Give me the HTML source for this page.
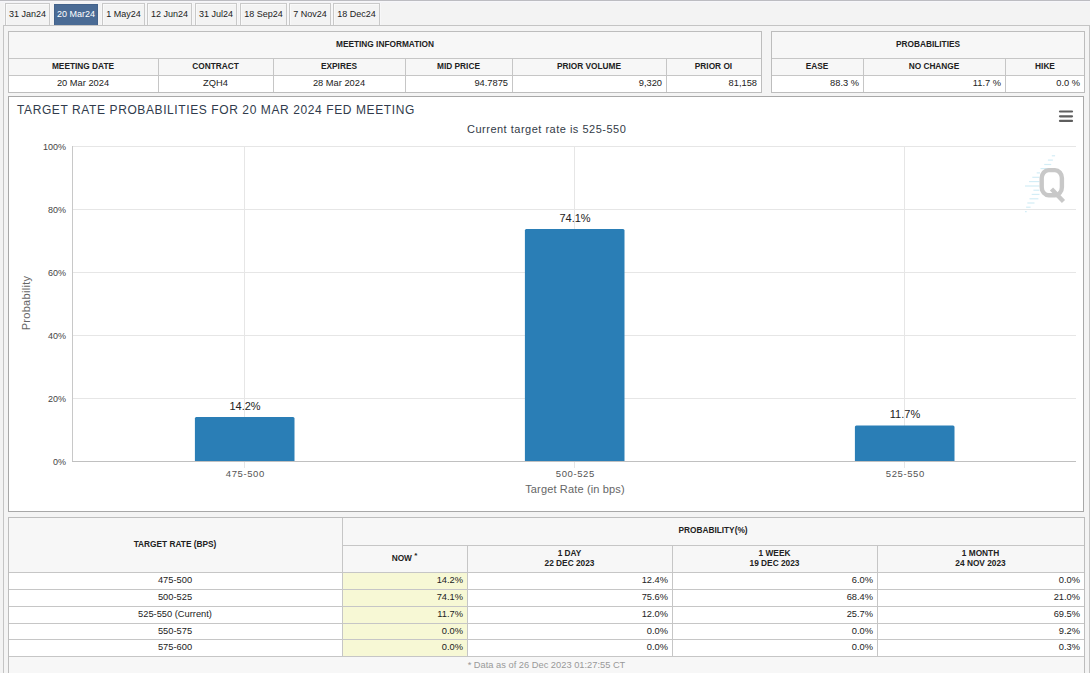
<!DOCTYPE html>
<html><head><meta charset="utf-8">
<style>
*{box-sizing:border-box;margin:0;padding:0}
html,body{width:1090px;height:673px;overflow:hidden}
body{background:#f3f3f3;position:relative;font-family:"Liberation Sans",sans-serif;color:#222}
.a{position:absolute}
.topline{left:0;top:0;width:1090px;height:1px;background:#bcbcc1;box-shadow:0 1px 0 #f6f6f9,0 2px 0 #f3f3f6}
.tab{position:absolute;top:3px;height:22px;border:1px solid #c9c9c9;border-bottom:none;background:#f3f3f3;font-size:9px;color:#222;text-align:center;line-height:21px;white-space:nowrap;box-shadow:inset 1px 1px 0 #f9f9f9,-1px 0 0 #f7f7f8,1px 0 0 #f7f7f8}
.tab.sel{top:4px;height:21px;line-height:19px;background:#4a6b95;border:1px solid #43628b;border-bottom:none;color:#fff;box-shadow:none}
.outer{left:3px;top:25px;width:1087px;height:660px;border:1px solid #c4c4c4;background:#f4f4f4}
.box{position:absolute;border:1px solid #bdbdbd;background:#f7f7f7}
.hl{position:absolute;height:1px;background:#c6c6c6}
.vl{position:absolute;width:1px;background:#c6c6c6}
.t{position:absolute;white-space:nowrap;font-size:9.3px;color:#222}
.h{position:absolute;white-space:nowrap;font-size:8.3px;font-weight:bold;color:#222;text-align:center}
.c{text-align:center}
.r{text-align:right}
.chart{left:8px;top:96px;width:1076px;height:416px;border:1px solid #a8a8a8;background:#fff}
.ct{position:absolute;white-space:nowrap}
.yl{left:16px;width:50px;text-align:right;font-size:9px;color:#444;margin-top:1px}
.dl{width:100px;text-align:center;font-size:11px;color:#222;margin-top:1px}
.xl{width:100px;text-align:center;top:468px;font-size:9.5px;letter-spacing:0.6px;text-indent:0.6px;color:#555}
</style></head><body>
<div class="a topline"></div>
<!-- tabs -->
<div class="tab" style="left:5px;width:45px">31 Jan24</div>
<div class="tab sel" style="left:54px;width:44px">20 Mar24</div>
<div class="tab" style="left:102px;width:43px">1 May24</div>
<div class="tab" style="left:147px;width:45px">12 Jun24</div>
<div class="tab" style="left:195px;width:42px">31 Jul24</div>
<div class="tab" style="left:240px;width:47px">18 Sep24</div>
<div class="tab" style="left:289px;width:42px">7 Nov24</div>
<div class="tab" style="left:333px;width:47px">18 Dec24</div>

<div class="a outer"></div>

<!-- meeting information table -->
<div class="box" style="left:8px;top:31px;width:754px;height:62px"></div>
<div class="a" style="left:9px;top:76px;width:752px;height:16px;background:#fff"></div>
<div class="hl" style="left:9px;top:58px;width:752px"></div>
<div class="hl" style="left:9px;top:75px;width:752px"></div>
<div class="vl" style="left:158px;top:59px;height:33px"></div>
<div class="vl" style="left:273px;top:59px;height:33px"></div>
<div class="vl" style="left:405px;top:59px;height:33px"></div>
<div class="vl" style="left:512px;top:59px;height:33px"></div>
<div class="vl" style="left:666px;top:59px;height:33px"></div>
<div class="h" style="left:8px;width:754px;top:39px">MEETING INFORMATION</div>
<div class="h" style="left:8px;width:150px;top:61px">MEETING DATE</div>
<div class="h" style="left:158px;width:115px;top:61px">CONTRACT</div>
<div class="h" style="left:273px;width:132px;top:61px">EXPIRES</div>
<div class="h" style="left:405px;width:107px;top:61px">MID PRICE</div>
<div class="h" style="left:512px;width:154px;top:61px">PRIOR VOLUME</div>
<div class="h" style="left:666px;width:95px;top:61px">PRIOR OI</div>
<div class="t c" style="left:8px;width:150px;top:78px">20 Mar 2024</div>
<div class="t c" style="left:158px;width:115px;top:78px">ZQH4</div>
<div class="t c" style="left:273px;width:132px;top:78px">28 Mar 2024</div>
<div class="t r" style="left:405px;width:103px;top:78px">94.7875</div>
<div class="t r" style="left:512px;width:150px;top:78px">9,320</div>
<div class="t r" style="left:666px;width:91px;top:78px">81,158</div>

<!-- probabilities table -->
<div class="box" style="left:771px;top:31px;width:314px;height:62px"></div>
<div class="a" style="left:772px;top:76px;width:312px;height:16px;background:#fff"></div>
<div class="hl" style="left:772px;top:58px;width:312px"></div>
<div class="hl" style="left:772px;top:75px;width:312px"></div>
<div class="vl" style="left:863px;top:59px;height:33px"></div>
<div class="vl" style="left:1005px;top:59px;height:33px"></div>
<div class="h" style="left:771px;width:314px;top:39px">PROBABILITIES</div>
<div class="h" style="left:771px;width:92px;top:61px">EASE</div>
<div class="h" style="left:863px;width:142px;top:61px">NO CHANGE</div>
<div class="h" style="left:1005px;width:80px;top:61px">HIKE</div>
<div class="t r" style="left:771px;width:88px;top:78px">88.3 %</div>
<div class="t r" style="left:863px;width:138px;top:78px">11.7 %</div>
<div class="t r" style="left:1005px;width:75px;top:78px">0.0 %</div>

<!-- chart -->
<div class="a chart"></div>
<svg class="a" style="left:0;top:0" width="1090" height="673">
  <g stroke="#e6e6e6" stroke-width="1">
    <line x1="72" y1="146.5" x2="1076" y2="146.5"/>
    <line x1="72" y1="209.5" x2="1076" y2="209.5"/>
    <line x1="72" y1="272.5" x2="1076" y2="272.5"/>
    <line x1="72" y1="335.5" x2="1076" y2="335.5"/>
    <line x1="72" y1="398.5" x2="1076" y2="398.5"/>
    <line x1="244.5" y1="146" x2="244.5" y2="468"/>
    <line x1="574.5" y1="146" x2="574.5" y2="468"/>
    <line x1="904.5" y1="146" x2="904.5" y2="468"/>
  </g>
  <line x1="72.5" y1="146" x2="72.5" y2="461" stroke="#c8c8c8"/>
  <g fill="#2a7eb6">
    <path d="M194.9 461V418.5Q194.9 417 196.4 417H293Q294.5 417 294.5 418.5V461Z"/>
    <path d="M524.9 461V230.5Q524.9 229 526.4 229H623Q624.5 229 624.5 230.5V461Z"/>
    <path d="M854.9 461V426.9Q854.9 425.4 856.4 425.4H953Q954.5 425.4 954.5 426.9V461Z"/>
  </g>
  <line x1="72" y1="461.5" x2="1076" y2="461.5" stroke="#c0c0c0"/>
</svg>
<div class="ct" style="left:17px;top:103px;font-size:12px;letter-spacing:0.6px;color:#303b4c">TARGET RATE PROBABILITIES FOR 20 MAR 2024 FED MEETING</div>
<div class="ct" style="left:467px;top:123px;font-size:11px;letter-spacing:0.5px;color:#333b47">Current target rate is 525-550</div>

<!-- y axis labels -->
<div class="ct yl" style="top:141px">100%</div>
<div class="ct yl" style="top:204px">80%</div>
<div class="ct yl" style="top:267px">60%</div>
<div class="ct yl" style="top:330px">40%</div>
<div class="ct yl" style="top:393px">20%</div>
<div class="ct yl" style="top:456px">0%</div>
<div class="ct" style="left:-4px;top:297px;width:60px;text-align:center;font-size:11px;letter-spacing:0.3px;color:#666;transform:rotate(-90deg)">Probability</div>
<!-- data labels -->
<div class="ct dl" style="left:195px;top:399px">14.2%</div>
<div class="ct dl" style="left:525px;top:211px">74.1%</div>
<div class="ct dl" style="left:855px;top:407px">11.7%</div>
<!-- x labels -->
<div class="ct xl" style="left:195px">475-500</div>
<div class="ct xl" style="left:525px">500-525</div>
<div class="ct xl" style="left:855px">525-550</div>
<div class="ct" style="left:475px;width:200px;top:483px;text-align:center;font-size:11px;letter-spacing:0.15px;color:#666">Target Rate (in bps)</div>
<!-- menu icon -->
<svg class="a" style="left:1055px;top:105px" width="22" height="22"><g stroke="#5e5e5e" stroke-width="2.2" stroke-linecap="round"><line x1="5" y1="6.5" x2="17" y2="6.5"/><line x1="5" y1="11.3" x2="17" y2="11.3"/><line x1="5" y1="15.9" x2="17" y2="15.9"/></g></svg>
<!-- watermark -->
<svg class="a" style="left:1015px;top:145px" width="60" height="75">
 <g stroke="#d3edf6" stroke-width="1.2">
  <line x1="36.8" y1="10.8" x2="40.1" y2="10.8"/>
  <line x1="32.9" y1="15.1" x2="37.9" y2="15.1"/>
  <line x1="29.2" y1="19.5" x2="36.2" y2="19.5"/>
  <line x1="25.5" y1="23.6" x2="34" y2="23.6"/>
  <line x1="21.7" y1="27.9" x2="25" y2="27.9"/>
  <line x1="17.3" y1="32.3" x2="24.5" y2="32.3"/>
  <line x1="14" y1="36.6" x2="24.5" y2="36.6"/>
  <line x1="10" y1="41" x2="24.5" y2="41"/>
  <line x1="18.4" y1="45.2" x2="24.5" y2="45.2"/>
  <line x1="16.7" y1="49.4" x2="24.5" y2="49.4"/>
  <line x1="14.5" y1="53.8" x2="23.4" y2="53.8"/>
  <line x1="12.3" y1="58" x2="19.5" y2="58"/>
  <line x1="11.1" y1="62.2" x2="15.6" y2="62.2"/>
  <line x1="10" y1="66.6" x2="11.7" y2="66.6"/>
 </g>
 <rect x="26.7" y="25.1" width="20.2" height="25.1" rx="7" ry="8" fill="none" stroke="#c8c8c8" stroke-width="4.4"/>
 <line x1="36.5" y1="44" x2="48.5" y2="56.5" stroke="#c8c8c8" stroke-width="4.4"/>
</svg>

<!-- bottom table -->
<div class="box" style="left:8px;top:517px;width:1077px;height:170px"></div>
<div class="a" style="left:9px;top:573px;width:1075px;height:83px;background:#fff"></div>
<div class="a" style="left:343px;top:573px;width:124px;height:83px;background:#f7f8d5"></div>
<div class="hl" style="left:343px;top:545px;width:741px"></div>
<div class="hl" style="left:9px;top:572px;width:1075px"></div>
<div class="hl" style="left:9px;top:589px;width:1075px"></div>
<div class="hl" style="left:9px;top:606px;width:1075px"></div>
<div class="hl" style="left:9px;top:623px;width:1075px"></div>
<div class="hl" style="left:9px;top:639px;width:1075px"></div>
<div class="hl" style="left:9px;top:656px;width:1075px"></div>
<div class="vl" style="left:342px;top:518px;height:138px"></div>
<div class="vl" style="left:467px;top:546px;height:110px"></div>
<div class="vl" style="left:672px;top:546px;height:110px"></div>
<div class="vl" style="left:877px;top:546px;height:110px"></div>
<div class="h" style="left:8px;width:334px;top:539px">TARGET RATE (BPS)</div>
<div class="h" style="left:342px;width:742px;top:525px">PROBABILITY(%)</div>
<div class="h" style="left:342px;width:125px;top:553px">NOW <span style="font-size:8px;position:relative;top:-3px">*</span></div>
<div class="h" style="left:467px;width:205px;top:548px;line-height:10px">1 DAY<br>22 DEC 2023</div>
<div class="h" style="left:672px;width:205px;top:548px;line-height:10px">1 WEEK<br>19 DEC 2023</div>
<div class="h" style="left:877px;width:207px;top:548px;line-height:10px">1 MONTH<br>24 NOV 2023</div>
<div class="t c" style="left:8px;width:334px;top:575px">475-500</div>
<div class="t r" style="left:342px;width:121px;top:575px">14.2%</div>
<div class="t r" style="left:467px;width:201px;top:575px">12.4%</div>
<div class="t r" style="left:672px;width:201px;top:575px">6.0%</div>
<div class="t r" style="left:877px;width:203px;top:575px">0.0%</div>
<div class="t c" style="left:8px;width:334px;top:592px">500-525</div>
<div class="t r" style="left:342px;width:121px;top:592px">74.1%</div>
<div class="t r" style="left:467px;width:201px;top:592px">75.6%</div>
<div class="t r" style="left:672px;width:201px;top:592px">68.4%</div>
<div class="t r" style="left:877px;width:203px;top:592px">21.0%</div>
<div class="t c" style="left:8px;width:334px;top:609px">525-550 (Current)</div>
<div class="t r" style="left:342px;width:121px;top:609px">11.7%</div>
<div class="t r" style="left:467px;width:201px;top:609px">12.0%</div>
<div class="t r" style="left:672px;width:201px;top:609px">25.7%</div>
<div class="t r" style="left:877px;width:203px;top:609px">69.5%</div>
<div class="t c" style="left:8px;width:334px;top:626px">550-575</div>
<div class="t r" style="left:342px;width:121px;top:626px">0.0%</div>
<div class="t r" style="left:467px;width:201px;top:626px">0.0%</div>
<div class="t r" style="left:672px;width:201px;top:626px">0.0%</div>
<div class="t r" style="left:877px;width:203px;top:626px">9.2%</div>
<div class="t c" style="left:8px;width:334px;top:642px">575-600</div>
<div class="t r" style="left:342px;width:121px;top:642px">0.0%</div>
<div class="t r" style="left:467px;width:201px;top:642px">0.0%</div>
<div class="t r" style="left:672px;width:201px;top:642px">0.0%</div>
<div class="t r" style="left:877px;width:203px;top:642px">0.3%</div>
<div class="t c" style="left:8px;width:1077px;top:660px;color:#999">* Data as of 26 Dec 2023 01:27:55 CT</div>
</body></html>
